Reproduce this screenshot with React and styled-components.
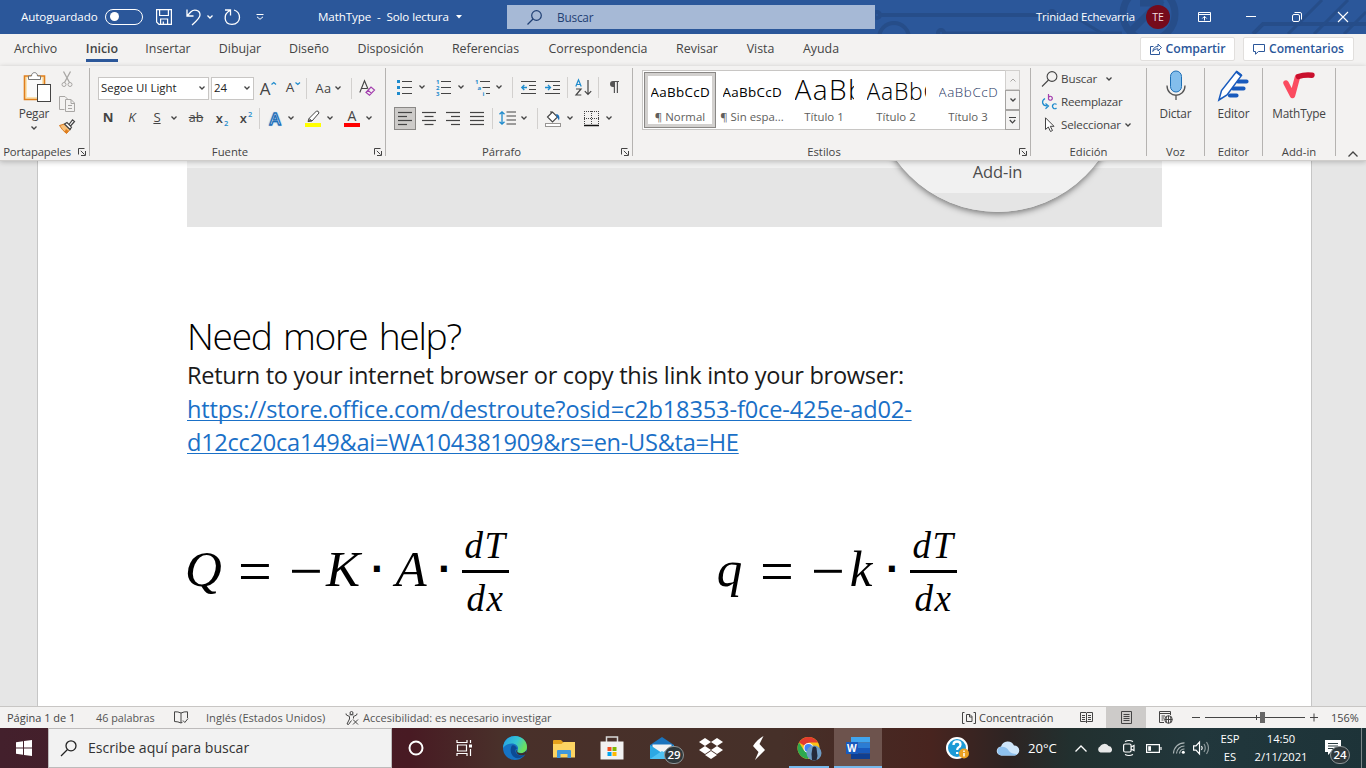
import React from 'react';
import styled, { createGlobalStyle } from 'styled-components';

const UI = '"Open Sans", "Noto Sans", sans-serif';
const INK = '#444444';
const BLUE = '#2b579a';
const ACCENT = '#1e8bcd';

const GlobalStyle = createGlobalStyle`
  * { box-sizing: border-box; }
  body { margin: 0; overflow: hidden; font-family: ${UI}; }
`;

const Screen = styled.div`
  width: 1366px;
  height: 768px;
  display: flex;
  flex-direction: column;
  background: #e6e6e6;
  overflow: hidden;
`;

const Art = styled.svg`
  display: block;
  flex: none;
  fill: none;
  overflow: visible;
`;

function Icon({ w = 16, h = 16, stroke = INK, sw = 1, children }) {
  return (
    <Art width={w} height={h} viewBox={`0 0 ${w} ${h}`} stroke={stroke} strokeWidth={sw}>
      {children}
    </Art>
  );
}

const Text = styled.span`
  display: block;
  flex: none;
  white-space: nowrap;
  width: ${(p) => (p.$w ? `${p.$w}px` : 'auto')};
  margin-left: ${(p) => p.$ml || 0}px;
  font-size: ${(p) => p.$size || 12}px;
  font-weight: ${(p) => p.$weight || 400};
  letter-spacing: ${(p) => p.$ls || 0}px;
  color: ${(p) => p.$color || INK};
  line-height: 16px;
`;

const Slot = styled.div`
  flex: none;
  display: flex;
  align-items: center;
  justify-content: center;
  width: ${(p) => p.$w}px;
  height: ${(p) => p.$h || 24}px;
  margin-left: ${(p) => p.$ml || 0}px;
`;

/* ---------- title bar ---------- */

const TitleBar = styled.header`
  position: relative;
  flex: none;
  height: 34px;
  display: flex;
  align-items: center;
  background: ${BLUE};
`;

const Circuit = styled.svg`
  position: absolute;
  left: 860px;
  top: 0;
  fill: none;
  stroke: #264d89;
`;

const Toggle = styled.div`
  flex: none;
  width: 38px;
  height: 16px;
  margin-left: 8px;
  margin-top: -1px;
  padding: 2px 4px;
  border: 1px solid #fff;
  border-radius: 8px;
`;

const Knob = styled.div`
  width: 9px;
  height: 9px;
  margin-top: 0.5px;
  border-radius: 50%;
  background: #fff;
`;

const SearchField = styled.div`
  position: relative;
  flex: none;
  width: 368px;
  height: 24px;
  margin-top: 0;
  margin-left: 45px;
  padding-left: 20px;
  display: flex;
  align-items: center;
  background: #a6b9d6;
`;

const Account = styled.div`
  position: relative;
  flex: none;
  margin-left: 161px;
  display: flex;
  align-items: center;
`;

const Avatar = styled.div`
  width: 24px;
  height: 24px;
  margin-left: 11px;
  border-radius: 50%;
  background: #750b1c;
  color: #f3dfe1;
  font-size: 10.5px;
  line-height: 24px;
  text-align: center;
`;

const WindowButtons = styled.div`
  position: relative;
  display: flex;
  align-items: center;
  margin-left: 17px;
  margin-top: -1px;
`;

function Chevron({ color = INK, w = 6 }) {
  return (
    <Icon w={w} h={4} stroke={color} sw={1.3}>
      <path d={`M.5 .5 L${w / 2} 3 L${w - 0.5} .5`} />
    </Icon>
  );
}

function Title() {
  return (
    <TitleBar>
      <Circuit width="506" height="34" strokeWidth="4">
        <circle cx="17" cy="15" r="3" />
        <path d="M20 15 H186" />
        <circle cx="192" cy="14" r="3" />
        <path d="M195 15 H212 L243 34" strokeWidth="3" />
        <circle cx="34" cy="38" r="15" />
        <circle cx="81" cy="33" r="3" />
        <path d="M85 33 H262" strokeWidth="3" />
        <circle cx="289" cy="14" r="26" strokeWidth="7" />
        <path d="M272 30 L302 0 M280 3 H300 V22" strokeWidth="7" />
        <path d="M393 34 L403 24 H506" />
        <path d="M428 34 L462 0 M454 34 L488 0 M484 34 L506 12" strokeWidth="3" />
      </Circuit>
      <Text $size={11.6} $color="#fff" $ls={-0.1} $ml={21} $w={76}>Autoguardado</Text>
      <Toggle><Knob /></Toggle>
      <Slot $w={16} $ml={13}>
        <Icon stroke="#fff" sw={1.2}>
          <path d="M.6 .6 H15.4 V15.4 H3 L.6 13 Z M3.6 .6 V6.5 H12.4 V.6 M4.6 15.4 V10 H11.6 V15.4 M7.3 12.5 V15" />
        </Icon>
      </Slot>
      <Slot $w={17} $ml={14}>
        <Icon w={17} stroke="#fff" sw={1.3}>
          <path d="M1 .5 V7 H7.5 M1 7 L5 2.8 C8-.2 14 1 14 6 C14 9 11 11.500 6 16" />
        </Icon>
      </Slot>
      <Slot $w={12} $ml={1}><Chevron color="#fff" /></Slot>
      <Slot $w={17} $ml={8}>
        <Icon w={17} stroke="#fff" sw={1.3}>
          <path d="M1 1 H6.500 V6.500 M6 1.5 C-1 5 -.5 15.400 8 15.400 C13 15.400 15.500 11.500 15.500 8.500 C15.500 5 13 2 10 1" />
        </Icon>
      </Slot>
      <Slot $w={14} $ml={12}>
        <Icon w={8} h={6} stroke="#fff">
          <path d="M.5 .5 H7.5 M1 2.800 L4 5.300 L7 2.800" />
        </Icon>
      </Slot>
      <Text $size={11.6} $color="#fff" $ls={-0.1} $ml={51} $w={131}>MathType&nbsp; -&nbsp; Solo lectura</Text>
      <Slot $w={7} $ml={6}>
        <Icon w={6} h={4} stroke="none"><path d="M0 0 H6 L3 3.500 Z" fill="#fff" /></Icon>
      </Slot>
      <SearchField>
        <Icon w={15} h={15} stroke="#1f3f73" sw={1.2}>
          <circle cx="9.500" cy="5.500" r="4.800" />
          <path d="M6 9 L.5 14.500" />
        </Icon>
        <Text $size={11.8} $ls={-0.2} $color="#1f3f73" $ml={15}>Buscar</Text>
      </SearchField>
      <Account>
        <Text $size={11.4} $color="#fff" $ls={-0.2} $w={99}>Trinidad Echevarria</Text>
        <Avatar>TE</Avatar>
      </Account>
      <WindowButtons>
        <Slot $w={34} $ml={0}>
          <Icon w={13} h={10} stroke="#fff">
            <path d="M.5 .5 H12.500 V9.500 H.5 Z M.5 2.500 H12.500 M6.500 8.500 V4.500 M4.300 6.500 L6.500 4.300 L8.700 6.500" />
          </Icon>
        </Slot>
        <Slot $w={46} $ml={7}><Icon w={10} h={2} stroke="#fff"><path d="M0 .5 H10" /></Icon></Slot>
        <Slot $w={46}>
          <Icon w={10} h={10} stroke="#fff">
            <rect x=".5" y="2.500" width="7" height="7" rx="1.500" />
            <path d="M2.500 .5 H8 Q9.500 .5 9.500 2 V7.500" />
          </Icon>
        </Slot>
        <Slot $w={46}><Icon w={10} h={10} stroke="#fff" sw={1.1}><path d="M0 0 L10 10 M10 0 L0 10" /></Icon></Slot>
      </WindowButtons>
    </TitleBar>
  );
}

/* ---------- tabs ---------- */

const TabBar = styled.nav`
  flex: none;
  height: 32px;
  display: flex;
  background: #f3f2f1;
  padding-left: 14px;
`;

const Tab = styled.div`
  flex: none;
  width: ${(p) => p.$w}px;
  height: 28px;
  margin-right: ${(p) => p.$gap || 28}px;
  display: flex;
  justify-content: center;
  font-size: 12.4px;
  font-weight: ${(p) => (p.$active ? 600 : 400)};
  letter-spacing: ${(p) => p.$ls || 0}px;
  line-height: 30px;
  white-space: nowrap;
  color: ${INK};
  border-bottom: 3px solid ${(p) => (p.$active ? BLUE : 'transparent')};
`;

const TabActions = styled.div`
  flex: 1;
  display: flex;
  justify-content: flex-end;
  gap: 8px;
  padding: 3px 12px 0 0;
`;

const ActionButton = styled.button`
  width: ${(p) => p.$w}px;
  height: 24px;
  padding: 0;
  display: flex;
  align-items: center;
  justify-content: center;
  gap: 4px;
  background: #fff;
  border: 1px solid #e1dfdd;
  border-radius: 2px;
  font-family: ${UI};
`;

const tabs = [
  ['Archivo', 43, 29], ['Inicio', 32, 28], ['Insertar', 44, 29], ['Dibujar', 42, 28],
  ['Diseño', 40, 28], ['Disposición', 67, 28], ['Referencias', 67, 29], ['Correspondencia', 100, 28],
  ['Revisar', 42, 28], ['Vista', 29, 28], ['Ayuda', 36, 28],
];

function Tabs() {
  return (
    <TabBar>
      {tabs.map(([name, w, gap]) => (
        <Tab key={name} $w={w} $gap={gap} $active={name === 'Inicio'}>{name}</Tab>
      ))}
      <TabActions>
        <ActionButton $w={95}>
          <Icon w={12} h={12} stroke={BLUE}>
            <path d="M3.500 3.500 H.5 V11.500 H9.500 V8.500 M2.800 8.500 C3.200 5 5 3.500 8 3.500 V1 L11.500 4.600 L8 8 V5.800 C5.500 5.800 4 6.500 2.800 8.500 Z" />
          </Icon>
          <Text $size={12.3} $ls={-0.1} $weight={600} $color={BLUE}>Compartir</Text>
        </ActionButton>
        <ActionButton $w={111}>
          <Icon w={12} h={12} stroke={BLUE}>
            <path d="M.5 1.500 H11.500 V8.500 H5.500 L2.500 11.200 V8.500 H.5 Z" />
          </Icon>
          <Text $size={12.1} $weight={600} $color={BLUE}>Comentarios</Text>
        </ActionButton>
      </TabActions>
    </TabBar>
  );
}

/* ---------- ribbon ---------- */

const RibbonBar = styled.section`
  position: relative;
  z-index: 2;
  flex: none;
  height: 95px;
  display: flex;
  padding-top: 2px;
  background: #f3f2f1;
  border-bottom: 1px solid #cfcdcb;
  box-shadow: 0 1px 5px rgba(0, 0, 0, 0.22);
`;

const Group = styled.div`
  flex: none;
  width: ${(p) => p.$w}px;
  height: 88px;
  display: flex;
  flex-direction: column;
  border-right: 1px solid #b5b3b1;
`;

const GroupBody = styled.div`
  flex: none;
  height: 76px;
  display: flex;
  flex-direction: ${(p) => (p.$column ? 'column' : 'row')};
`;

const GroupFoot = styled.div`
  flex: none;
  height: 16px;
  display: flex;
  align-items: center;
  justify-content: center;
`;

const FootLabel = styled.div`
  flex: 1;
  text-align: center;
  white-space: nowrap;
  font-size: 11.3px;
  letter-spacing: ${(p) => (p.$tight ? -0.15 : 0)}px;
  line-height: 16px;
  color: ${INK};
`;

const Tools = styled.div`
  flex: none;
  display: flex;
  align-items: center;
  height: 30px;
  margin-top: ${(p) => p.$mt || 0}px;
  padding-left: ${(p) => p.$pl || 0}px;
`;

const Divider = styled.div`
  flex: none;
  width: 1px;
  height: 21px;
  margin-left: ${(p) => p.$ml}px;
  background: #d2d0ce;
`;

const Combo = styled.div`
  flex: none;
  width: ${(p) => p.$w}px;
  height: 23px;
  margin-left: ${(p) => p.$ml || 0}px;
  padding: 0 3px 0 2px;
  display: flex;
  align-items: center;
  justify-content: space-between;
  background: #fff;
  border: 1px solid #c8c6c4;
`;

const Glyph = styled.span`
  display: block;
  font-family: ${UI};
  font-size: ${(p) => p.$size || 13}px;
  font-weight: ${(p) => p.$weight || 400};
  font-style: ${(p) => (p.$italic ? 'italic' : 'normal')};
  text-decoration: ${(p) => p.$deco || 'none'};
  letter-spacing: ${(p) => p.$ls || 0}px;
  color: ${(p) => p.$color || INK};
  line-height: 1;
  sub, sup { font-size: 7.5px; line-height: 0; color: ${ACCENT}; margin-left: 1px; font-weight: 600; }
`;

function Launcher() {
  return (
    <Slot $w={15} $h={12}>
      <Icon w={8} h={8}>
        <path d="M.5 6.500 V.5 H6.500 M2.800 2.800 L6.500 6.500 M7.500 3 V7.500 H3" />
      </Icon>
    </Slot>
  );
}

function Foot({ label, launcher, tight }) {
  return (
    <GroupFoot>
      <FootLabel $tight={tight}>{label}</FootLabel>
      {launcher && <Launcher />}
    </GroupFoot>
  );
}

const PasteColumn = styled.div`
  width: 50px;
  margin-left: 9px;
  padding-top: 4px;
  display: flex;
  flex-direction: column;
  align-items: center;
`;

const SmallColumn = styled.div`
  width: 16px;
  display: flex;
  flex-direction: column;
  align-items: center;
  gap: 7.5px;
  padding-top: 3px;
`;

const PasteBox = styled.div`
  width: 50px;
  display: flex;
  justify-content: center;
  padding: 0 0 3px 5px;
`;

function Clipboard() {
  return (
    <Group $w={90}>
      <GroupBody>
        <PasteColumn>
          <PasteBox>
            <Icon w={28} h={30}>
              <path d="M1.500 4 H21.500 V27.500 H1.500 Z" fill="#fbe3b2" stroke="#e07f1c" strokeWidth="1.6" />
              <path d="M4 6 H19 V25 H4 Z" fill="#fafafa" stroke="none" />
              <path d="M5.500 7.500 V4 H8.500 C8.500 -.5 14.500 -.5 14.500 4 H17.500 V7.500 Z" fill="#fff" stroke="#777" />
              <rect x="14.500" y="12.500" width="13" height="17" fill="#fff" stroke="#444" />
            </Icon>
          </PasteBox>
          <Text $size={11.8} $ls={-0.2}>Pegar</Text>
          <Slot $w={10} $h={13}><Chevron /></Slot>
        </PasteColumn>
        <SmallColumn>
          <Icon w={12} h={17} stroke="#a8a6a4">
            <path d="M2.500 .5 L8.500 11.500 M9.500 .5 L3.500 11.500" strokeWidth="1.3" />
            <circle cx="3" cy="13.500" r="2" /><circle cx="9" cy="13.500" r="2" />
          </Icon>
          <Icon w={16} h={16} stroke="#a8a6a4">
            <path d="M5.500 13.500 H.5 V.5 H6 L8.500 3" />
            <path d="M6.500 3.500 H12 L15.500 7 V15.500 H6.500 Z M12 3.500 V7.500 H15.500 M9 9.500 H13 M9 12.500 H13" />
          </Icon>
          <Icon w={16} h={15}>
            <path d="M.5 6.500 L5.500 5 L11 10.500 L7.500 14.500 Q3 11 .5 6.500 Z" fill="#f8c07a" stroke="#d9781c" />
            <path d="M5.500 13 L7.500 14.500 L9.500 12 L7 10 Z" fill="#e07f1c" stroke="none" />
            <path d="M5.500 5 L8 3.500 L12.500 8 L11 10.500 Z M10 5.500 L13.500 .8 L15.500 2.500 L11.500 7" fill="#fff" stroke="#444" strokeWidth="1.200" />
          </Icon>
        </SmallColumn>
      </GroupBody>
      <Foot label="Portapapeles" launcher tight />
    </Group>
  );
}

const GlowA = styled.span`
  font-size: 17px;
  font-weight: 600;
  line-height: 1;
  color: #fff;
  -webkit-text-stroke: 1.3px #1f6fb8;
  text-shadow: 0 0 2px #6fb6e6, 0 0 2px #6fb6e6;
`;

const Swatched = styled.div`
  display: flex;
  flex-direction: column;
  align-items: center;
`;

const Swatch = styled.div`
  width: 16px;
  height: 4px;
  background: ${(p) => p.$color};
  border: ${(p) => (p.$outline ? '1px solid #979593' : 'none')};
`;

function FontGroup() {
  return (
    <Group $w={296}>
      <GroupBody $column>
        <Tools $pl={8} $mt={5}>
          <Combo $w={111}><Text $size={11.4} $color="#222">Segoe UI Light</Text><Chevron /></Combo>
          <Combo $w={43} $ml={2}><Text $size={11.4} $color="#222">24</Text><Chevron /></Combo>
          <Slot $w={10} $ml={6}><Glyph $size={17}>A</Glyph></Slot>
          <Slot $w={5} $h={12} $ml={0.5}><Icon w={5} h={16} stroke={ACCENT} sw={1.2}><path d="M.5 4.500 L2.800 2.500 L5 4.500" /></Icon></Slot>
          <Slot $w={9} $ml={10}><Glyph $size={13.5}>A</Glyph></Slot>
          <Slot $w={5} $h={12}><Icon w={5} h={16} stroke={ACCENT} sw={1.2}><path d="M.5 2.500 L2.800 4.500 L5 2.500" /></Icon></Slot>
          <Divider $ml={6.5} />
          <Slot $w={17} $ml={8}><Glyph $size={12.8} $ls={0.5}>Aa</Glyph></Slot>
          <Slot $w={8} $ml={2}><Chevron /></Slot>
          <Divider $ml={9} />
          <Slot $w={16} $ml={7}>
            <Icon w={16} h={16}>
              <path d="M.8 12.500 L5.500 .8 L9 9 M2.400 8.500 H8" strokeWidth="1.1" />
              <path d="M7 12.500 L12 7 L15.500 10 L10.500 15.300 Z M9 10.300 L12.500 13.400" fill="#f3f2f1" stroke="#a33fae" strokeWidth="1.200" />
            </Icon>
          </Slot>
        </Tools>
        <Tools $pl={7}>
          <Slot $w={22}><Glyph $size={13.2} $weight={700}>N</Glyph></Slot>
          <Slot $w={22} $ml={2}><Glyph $size={13.2} $italic>K</Glyph></Slot>
          <Slot $w={22} $ml={3}><Glyph $size={13.2} $deco="underline">S</Glyph></Slot>
          <Slot $w={8} $ml={2}><Chevron /></Slot>
          <Slot $w={22} $ml={7}><Glyph $size={12.5} $deco="line-through">ab</Glyph></Slot>
          <Slot $w={22} $ml={4}><Glyph $size={13} $weight={600}>x<sub>2</sub></Glyph></Slot>
          <Slot $w={22} $ml={2}><Glyph $size={13} $weight={600}>x<sup>2</sup></Glyph></Slot>
          <Divider $ml={2} />
          <Slot $w={18} $ml={6}><GlowA>A</GlowA></Slot>
          <Slot $w={8} $ml={3}><Chevron /></Slot>
          <Slot $w={18} $ml={9}>
            <Swatched>
              <Icon w={16} h={13}>
                <path d="M4 8.500 L11.500 1 Q13.500 .5 14 3 L7 11 Z M4 8.500 L3 11.500 L7 11" fill="#fff" />
                <path d="M3 11.500 L5 9.500 L7 11 Z" fill="#555" stroke="none" />
              </Icon>
              <Swatch $color="#ffff00" />
            </Swatched>
          </Slot>
          <Slot $w={8} $ml={4}><Chevron /></Slot>
          <Slot $w={18} $ml={9}>
            <Swatched><Glyph $size={14}>A</Glyph><Swatch $color="#ff0000" /></Swatched>
          </Slot>
          <Slot $w={8} $ml={4}><Chevron /></Slot>
        </Tools>
      </GroupBody>
      <Foot label="Fuente" launcher />
    </Group>
  );
}

const ToggleButton = styled.div`
  flex: none;
  width: 22px;
  height: 23px;
  margin-left: 8px;
  display: flex;
  align-items: center;
  justify-content: center;
  background: #cdcbc9;
  border: 1px solid #8a8886;
`;

const NumberMark = styled.text`
  font: 700 6px ${UI};
  fill: ${ACCENT};
  stroke: none;
`;

function Lines({ rows }) {
  return (
    <Icon w={14} h={13} sw={1.2}>
      {rows.map(([a, b], i) => <path key={i} d={`M${a} ${0.5 + i * 4} H${b}`} />)}
    </Icon>
  );
}

function ParagraphGroup() {
  return (
    <Group $w={247}>
      <GroupBody $column>
        <Tools $pl={11} $mt={4}>
          <Slot $w={15}>
            <Icon w={15} h={15}>
              <path d="M0 0 h3 v3 h-3 z M0 6 h3 v3 h-3 z M0 12 h3 v3 h-3 z" fill={ACCENT} stroke="none" />
              <path d="M5 1.500 H15 M5 7.500 H15 M5 13.500 H15" />
            </Icon>
          </Slot>
          <Slot $w={8} $ml={6}><Chevron /></Slot>
          <Slot $w={15} $ml={10}>
            <Icon w={15} h={15}>
              <NumberMark x="0" y="4">1</NumberMark><NumberMark x="0" y="10">2</NumberMark><NumberMark x="0" y="16">3</NumberMark>
              <path d="M5 1.500 H15 M5 7.500 H15 M5 13.500 H15" />
            </Icon>
          </Slot>
          <Slot $w={8} $ml={6}><Chevron /></Slot>
          <Slot $w={15} $ml={10}>
            <Icon w={15} h={15}>
              <NumberMark x="0" y="4">1</NumberMark><NumberMark x="2.500" y="10">a</NumberMark><NumberMark x="7.500" y="16">i</NumberMark>
              <path d="M5 1.500 H15 M7.500 7.500 H15 M11 13.500 H15" />
            </Icon>
          </Slot>
          <Slot $w={8} $ml={5}><Chevron /></Slot>
          <Divider $ml={9} />
          <Slot $w={15} $ml={8}>
            <Icon w={15} h={13}>
              <path d="M0 .5 H15 M8 4.500 H15 M8 8.500 H15 M0 12.500 H15" />
              <path d="M6 6.500 H.8 M3.300 4 L.8 6.500 L3.300 9" stroke={ACCENT} strokeWidth="1.300" />
            </Icon>
          </Slot>
          <Slot $w={15} $ml={9}>
            <Icon w={15} h={13}>
              <path d="M0 .5 H15 M8 4.500 H15 M8 8.500 H15 M0 12.500 H15" />
              <path d="M0 6.500 H5.500 M3 4 L5.500 6.500 L3 9" stroke={ACCENT} strokeWidth="1.300" />
            </Icon>
          </Slot>
          <Divider $ml={7} />
          <Slot $w={17} $ml={7}>
            <Icon w={17} h={17}>
              <path d="M.8 7.500 L3.500 .8 L6.200 7.500 M1.800 5.500 H5.200" stroke={ACCENT} strokeWidth="1.200" />
              <path d="M1 10 H6 L1 16 H6.300 M13 1 V15.500 M9.800 12.200 L13 15.500 L16.200 12.200" strokeWidth="1.200" />
            </Icon>
          </Slot>
          <Divider $ml={6} />
          <Slot $w={12} $ml={9}>
            <Icon w={10} h={12} stroke="none">
              <path d="M4 6 A3 3 0 0 1 4 0 H10 V1 H9 V12 H7.800 V1 H6 V12 H4.800 V6 Z" fill="#555" />
            </Icon>
          </Slot>
        </Tools>
        <Tools $mt={1}>
          <ToggleButton><Lines rows={[[0, 14], [0, 9], [0, 14], [0, 9]]} /></ToggleButton>
          <Slot $w={14} $ml={6}><Lines rows={[[0, 14], [2.5, 11.5], [0, 14], [2.5, 11.5]]} /></Slot>
          <Slot $w={14} $ml={10}><Lines rows={[[0, 14], [5, 14], [0, 14], [5, 14]]} /></Slot>
          <Slot $w={14} $ml={10}><Lines rows={[[0, 14], [0, 14], [0, 14], [0, 14]]} /></Slot>
          <Divider $ml={8} />
          <Slot $w={17} $ml={6}>
            <Icon w={17} h={14}>
              <path d="M7.500 1 H17 M7.500 5 H17 M7.500 9 H17 M7.500 13 H17" />
              <path d="M3 .8 V13.200 M.5 3.300 L3 .8 L5.500 3.300 M.5 10.700 L3 13.200 L5.500 10.700" stroke={ACCENT} strokeWidth="1.300" />
            </Icon>
          </Slot>
          <Slot $w={8} $ml={4}><Chevron /></Slot>
          <Divider $ml={9} />
          <Slot $w={16} $ml={7}>
            <Swatched>
              <Icon w={16} h={13}>
                <path d="M6 1 V4 M2.500 7 L7.500 2 L12.500 7 L7.500 12 Z" fill="#fff" strokeWidth="1.100" />
                <path d="M11 4 Q15.500 4 14 10.500 L12 7 Z" fill="#1f6fb8" stroke="none" />
              </Icon>
              <Swatch $color="#fff" $outline />
            </Swatched>
          </Slot>
          <Slot $w={8} $ml={5}><Chevron /></Slot>
          <Slot $w={15} $ml={10}>
            <Icon w={15} h={15}>
              <path d="M.5 0 V14 M14.500 0 V14 M0 .5 H15 M7.500 0 V14 M0 7.500 H15" strokeDasharray="1 1" />
              <path d="M0 14.500 H15" stroke="#111" strokeWidth="1.500" />
            </Icon>
          </Slot>
          <Slot $w={8} $ml={6}><Chevron /></Slot>
        </Tools>
      </GroupBody>
      <Foot label="Párrafo" launcher />
    </Group>
  );
}

const Gallery = styled.div`
  width: 378px;
  height: 60px;
  margin: 2px 0 0 9px;
  display: flex;
  background: #fff;
  border: 1px solid #c8c6c4;
`;

const StyleCard = styled.div`
  flex: none;
  width: 72px;
  height: 56px;
  margin: 1px 0 0 ${(p) => (p.$active ? 1 : 0)}px;
  padding: ${(p) => (p.$active ? 0 : 4)}px;
  display: flex;
  flex-direction: column;
  align-items: center;
  border: ${(p) => (p.$active ? '1px solid #8a8886' : 'none')};
  box-shadow: ${(p) => (p.$active ? 'inset 0 0 0 3px #d2d0ce' : 'none')};
  padding-top: ${(p) => (p.$active ? 3 : 4)}px;
`;

const Preview = styled.div`
  flex: none;
  width: 59px;
  height: 33px;
  overflow: hidden;
  white-space: nowrap;
  font-family: ${UI};
  font-size: ${(p) => p.$size}px;
  font-weight: ${(p) => p.$weight || 400};
  letter-spacing: ${(p) => p.$ls || 0}px;
  line-height: ${(p) => p.$lh}px;
  color: ${(p) => p.$color || '#000'};
`;

const CardName = styled.div`
  width: 64px;
  text-align: center;
  font-size: 11.4px;
  line-height: 16px;
  white-space: nowrap;
  color: #605e5c;
`;

const Scroller = styled.div`
  width: 15px;
  margin: -1px -1px -1px auto;
  display: flex;
  flex-direction: column;
`;

const ScrollButton = styled.div`
  height: 20px;
  display: flex;
  align-items: center;
  justify-content: center;
  border: 1px solid ${(p) => (p.$dim ? '#d2d0ce' : '#a5a3a1')};
  background: #f3f2f1;
`;

const cards = [
  { name: '¶ Normal', sample: 'AaBbCcD', size: 13.4, lh: 32, ls: 0.3, active: true },
  { name: '¶ Sin espa...', sample: 'AaBbCcD', size: 13.4, lh: 32, ls: 0.3 },
  { name: 'Título 1', sample: 'AaBb', size: 28, lh: 26, weight: 300, ls: 1.4 },
  { name: 'Título 2', sample: 'AaBbC', size: 23, lh: 30, weight: 300, ls: 0.7 },
  { name: 'Título 3', sample: 'AaBbCcD', size: 13.4, lh: 32, weight: 300, ls: 0.6, color: '#1f3763' },
];

function StylesGroup() {
  return (
    <Group $w={398}>
      <GroupBody>
        <Gallery>
          {cards.map((c) => (
            <StyleCard key={c.name} $active={c.active}>
              <Preview $size={c.size} $lh={c.lh} $weight={c.weight} $ls={c.ls} $color={c.color}>{c.sample}</Preview>
              <CardName>{c.name}</CardName>
            </StyleCard>
          ))}
          <Scroller>
            <ScrollButton $dim><Icon w={6} h={4} stroke="#a8a6a4"><path d="M.5 3.500 L3 1 L5.500 3.500" /></Icon></ScrollButton>
            <ScrollButton><Chevron /></ScrollButton>
            <ScrollButton>
              <Icon w={7} h={7}><path d="M0 .5 H7 M.8 3 L3.500 5.800 L6.200 3" strokeWidth="1.200" /></Icon>
            </ScrollButton>
          </Scroller>
        </Gallery>
      </GroupBody>
      <Foot label="Estilos" launcher />
    </Group>
  );
}

const EditRows = styled.div`
  margin-top: -1px;
`;

const EditRow = styled.div`
  height: 23px;
  padding-left: 11px;
  display: flex;
  align-items: center;
`;

function EditingGroup() {
  return (
    <Group $w={116}>
      <GroupBody $column>
        <EditRows>
          <EditRow>
            <Icon stroke={INK} sw={1.1}>
              <circle cx="10" cy="5.500" r="4.900" /><path d="M6.500 9 L0 15.500" />
            </Icon>
            <Text $size={11.6} $ls={-0.1} $ml={3} $w={36}>Buscar</Text>
            <Slot $w={8} $ml={8}><Chevron /></Slot>
          </EditRow>
          <EditRow>
            <Icon sw={1.2}>
              <path d="M6.500 0 V5.500 M6.500 3.500 a2 2 0 1 1 0 1.500" stroke="#a33fae" />
              <path d="M14.500 10.500 a2.300 2.500 0 1 0 0 3.500 M3 4.500 C-1 7 0 11.500 5 12 M3.500 9.500 L6.500 12 L3.500 14.800" stroke={ACCENT} />
            </Icon>
            <Text $size={11.6} $ls={-0.25} $ml={3} $w={62}>Reemplazar</Text>
          </EditRow>
          <EditRow>
            <Icon><path d="M3.500 .8 V12.500 L6.300 10 L8.500 14.500 L10.500 13.500 L8.300 9.300 H12 Z" fill="#fff" /></Icon>
            <Text $size={11.6} $ls={-0.15} $ml={3} $w={61}>Seleccionar</Text>
            <Slot $w={8} $ml={2}><Chevron /></Slot>
          </EditRow>
        </EditRows>
      </GroupBody>
      <Foot label="Edición" />
    </Group>
  );
}

const BigTool = styled.div`
  flex: 1;
  padding-top: 2px;
  display: flex;
  flex-direction: column;
  align-items: center;
  gap: 4px;
`;

function BigGroup({ w, name, foot, children }) {
  return (
    <Group $w={w}>
      <GroupBody>
        <BigTool>
          {children}
          <Text $size={11.8} $ls={-0.15}>{name}</Text>
        </BigTool>
      </GroupBody>
      <Foot label={foot} />
    </Group>
  );
}

const CollapseButton = styled.div`
  flex: 1;
  display: flex;
  align-items: flex-end;
  justify-content: center;
  padding: 0 0 3px 3px;
`;

function Ribbon() {
  return (
    <RibbonBar>
      <Clipboard />
      <FontGroup />
      <ParagraphGroup />
      <StylesGroup />
      <EditingGroup />
      <BigGroup w={58} name="Dictar" foot="Voz">
        <Icon w={20} h={31}>
          <rect x="4.500" y="1" width="11" height="21" rx="5.500" fill="#83beec" stroke="#1e6fb5" />
          <path d="M1 15.500 C1 28.500 19 28.500 19 15.500 M10 25.500 V30" stroke="#555" strokeWidth="1.300" />
        </Icon>
      </BigGroup>
      <BigGroup w={58} name="Editor" foot="Editor">
        <Icon w={31} h={31}>
          <path d="M20 11.500 H28.500 M15 18.500 H25.500 M12 25.500 H18.500" stroke="#185abd" strokeWidth="4.200" strokeLinecap="round" />
          <path d="M.9 30 L3.500 20.500 L18.500 1.500 L23.500 5.500 L9 25 Z" fill="#fff" stroke="#185abd" strokeWidth="1.500" />
          <path d="M17.500 2.500 L19 .8 L24 4.600 L22.500 6.500 Z" fill="#185abd" stroke="none" />
        </Icon>
      </BigGroup>
      <BigGroup w={73} name="MathType" foot="Add-in">
        <Icon w={32} h={31}>
          <path d="M3 13 L9.500 25.500 L14.500 7" stroke="#fb4b60" strokeWidth="5.400" strokeLinecap="round" strokeLinejoin="round" />
          <path d="M15.500 6.500 Q21 4.500 29 5.200" stroke="#c9102d" strokeWidth="5.400" strokeLinecap="round" />
        </Icon>
      </BigGroup>
      <CollapseButton><Icon w={10} h={6} sw={1.3}><path d="M.5 5.500 L5 1 L9.500 5.500" /></Icon></CollapseButton>
    </RibbonBar>
  );
}

/* ---------- document ---------- */

const Workspace = styled.main`
  flex: none;
  height: 545px;
  padding-left: 37px;
  background: #e6e6e6;
`;

const Page = styled.article`
  width: 1275px;
  height: 545px;
  padding-left: 149px;
  background: #fff;
  border-left: 1px solid #c6c6c6;
  border-right: 1px solid #c6c6c6;
`;

const Banner = styled.div`
  position: relative;
  width: 975px;
  height: 66px;
  overflow: hidden;
  background: linear-gradient(#f0f0f0 7px, #e5e5e5 7px);
`;

const Badge = styled.div`
  position: absolute;
  left: 686px;
  top: -198px;
  width: 249px;
  height: 249px;
  border-radius: 50%;
  background: linear-gradient(#f1f1f1 230px, #e5e5e5 230px);
  box-shadow: 0 2px 6px rgba(0, 0, 0, 0.5);
  padding-top: 197px;
  text-align: center;
  font-size: 16.5px;
  line-height: 24px;
  letter-spacing: -0.15px;
  color: #4c4c4c;
`;

const Heading = styled.h1`
  margin: 85px 0 0;
  height: 47px;
  font-size: 37.2px;
  font-weight: 300;
  letter-spacing: -1.3px;
  word-spacing: 3px;
  line-height: 48px;
  white-space: nowrap;
  color: #000;
`;

const Copy = styled.p`
  margin: 0;
  height: 33.500px;
  font-size: 23.600px;
  line-height: 33.500px;
  letter-spacing: ${(p) => p.$ls || 0}px;
  white-space: nowrap;
  color: #1a1a1a;
`;

const LinkText = styled.a`
  color: #1a70c7;
  text-decoration: underline;
  text-decoration-thickness: 1px;
  text-underline-offset: 2px;
  text-decoration-skip-ink: none;
`;

const MathRow = styled.div`
  height: 100px;
  margin-top: 61px;
  display: flex;
  align-items: center;
  font-family: "Liberation Serif", serif;
  color: #000;
`;

const Equation = styled.div`
  flex: none;
  display: flex;
  align-items: center;
  margin-right: 208px;
`;

const Sym = styled.div`
  flex: none;
  width: ${(p) => p.$w}px;
  margin-bottom: 3px;
  display: flex;
  justify-content: center;
  font-style: italic;
  font-size: 51px;
  line-height: 60px;
`;

const Operator = styled(Sym)`
  font-style: normal;
  font-size: 60px;
  margin-bottom: 0;
`;

const Dot = styled(Sym)`
  font-family: "Liberation Sans", sans-serif;
  font-style: normal;
  font-weight: 700;
  font-size: 42px;
`;

const Fraction = styled.div`
  width: 47px;
  margin: 2px 0 0 2px;
  text-align: center;
  font-style: italic;
  font-size: 37px;
  letter-spacing: 1.5px;
  line-height: 47px;
`;

const Numerator = styled.div`
  height: 51px;
  border-bottom: 3px solid #000;
`;

const Denominator = styled.div`
  height: 49px;
  line-height: 52px;
`;

function Derivative() {
  return (
    <Fraction>
      <Numerator>dT</Numerator>
      <Denominator>dx</Denominator>
    </Fraction>
  );
}

function Document() {
  return (
    <Workspace>
      <Page>
        <Banner><Badge>Add-in</Badge></Banner>
        <Heading>Need more help?</Heading>
        <Copy $ls={-0.31}>Return to your internet browser or copy this link into your browser:</Copy>
        <Copy $ls={-0.15}><LinkText>https://store.office.com/destroute?osid=c2b18353-f0ce-425e-ad02-</LinkText></Copy>
        <Copy $ls={-0.28}><LinkText>d12cc20ca149&amp;ai=WA104381909&amp;rs=en-US&amp;ta=HE</LinkText></Copy>
        <MathRow>
          <Equation>
            <Sym $w={33}>Q</Sym>
            <Operator $w={70}>=</Operator>
            <Operator $w={32}>−</Operator>
            <Sym $w={42}>K</Sym>
            <Dot $w={28}>·</Dot>
            <Sym $w={38}>A</Sym>
            <Dot $w={30}>·</Dot>
            <Derivative />
          </Equation>
          <Equation>
            <Sym $w={25}>q</Sym>
            <Operator $w={70}>=</Operator>
            <Operator $w={32}>−</Operator>
            <Sym $w={34}>k</Sym>
            <Dot $w={30}>·</Dot>
            <Derivative />
          </Equation>
        </MathRow>
      </Page>
    </Workspace>
  );
}

/* ---------- status bar ---------- */

const StatusBar = styled.footer`
  flex: none;
  height: 22px;
  display: flex;
  align-items: center;
  background: #f3f2f1;
  border-top: 1px solid #c8c6c4;
`;

const StatusRight = styled.div`
  flex: none;
  display: flex;
  align-items: center;
  margin-left: 410px;
`;

const ViewButton = styled.div`
  width: 40px;
  height: 21px;
  display: flex;
  align-items: center;
  justify-content: center;
  background: ${(p) => (p.$active ? '#cdcbc9' : 'transparent')};
`;

function Status() {
  return (
    <StatusBar>
      <Text $size={11} $ml={7} $w={68}>Página 1 de 1</Text>
      <Text $size={10.8} $ml={21} $w={59} $color="#555">46 palabras</Text>
      <Slot $w={14} $ml={19} $h={20}>
        <Icon w={14} h={13}>
          <path d="M7 2 V12 M7 2 Q4 .5 .5 .8 V10.500 Q4 10.500 7 12 M7 2 Q10 .5 13.500 .8 V7 M7 12 L8.500 11.200 M9 9.500 L10.800 11.500 L14 7.500" />
        </Icon>
      </Slot>
      <Text $size={11.1} $ml={18} $w={120} $color="#555">Inglés (Estados Unidos)</Text>
      <Slot $w={14} $ml={19} $h={20}>
        <Icon w={14} h={14}>
          <circle cx="6.500" cy="2" r="1.500" />
          <path d="M1 2.500 Q0 4 4.500 5.500 V8 L2 13 L3.500 13.500 L6.500 9.500 M12 2.500 Q13 4 8.500 5.500 V7.500 M4.500 3.800 H8.500 M8 8.500 L13 13.500 M13 8.500 L8 13.500" />
        </Icon>
      </Slot>
      <Text $size={11} $ml={4} $w={189} $color="#555">Accesibilidad: es necesario investigar</Text>
      <StatusRight>
        <Slot $w={14} $h={20}>
          <Icon w={14} h={12}>
            <path d="M2.500 .5 H.5 V11.500 H2.500 M11.500 .5 H13.500 V11.500 H11.500 M4.500 2.500 H8 L10 4.500 V9.500 H4.500 Z M7.500 2.500 V5 H10" />
          </Icon>
        </Slot>
        <Text $size={11} $ml={3} $w={75}>Concentración</Text>
        <Slot $w={12} $h={20} />
        <ViewButton>
          <Icon w={13} h={11}>
            <path d="M6.500 1 V11 M.5 .5 H6 L6.500 1 L7 .5 H12.500 V9.500 H7.500 L6.500 10.500 L5.500 9.500 H.5 Z M2 3.500 H5 M2 5.500 H5 M2 7.500 H5 M8 3.500 H11 M8 5.500 H11 M8 7.500 H11" />
          </Icon>
        </ViewButton>
        <ViewButton $active>
          <Icon w={11} h={13}>
            <path d="M.5 .5 H10.500 V12.500 H.5 Z M2.500 3.500 H8.500 M2.500 5.500 H8.500 M2.500 7.500 H8.500 M2.500 9.500 H8.500" />
          </Icon>
        </ViewButton>
        <ViewButton>
          <Icon w={14} h={13}>
            <path d="M5 11.500 H.5 V.5 H11.500 V4 M.5 2.500 H11.500 M2.500 5 H6 M2.500 7 H5 M2.500 9 H4.500" />
            <circle cx="9.500" cy="8.500" r="3.800" fill="#f3f2f1" />
            <path d="M5.700 8.500 H13.300 M9.500 4.700 V12.300 M7.500 5.500 Q6.500 8.500 7.500 11.500 M11.500 5.500 Q12.500 8.500 11.500 11.500" />
          </Icon>
        </ViewButton>
        <Slot $w={126} $ml={6} $h={20}>
          <Icon w={126} h={12}>
            <path d="M0 5.500 H8 M13 5.500 H113 M118 5.500 H126 M122 1.500 V9.500 M64.500 3 V8" />
            <path d="M68 0 H73 V11 H68 Z" fill="#666" stroke="none" />
          </Icon>
        </Slot>
        <Text $size={10.9} $ml={13}>156%</Text>
      </StatusRight>
    </StatusBar>
  );
}

/* ---------- taskbar ---------- */

const TaskBar = styled.div`
  flex: none;
  height: 40px;
  display: flex;
  align-items: center;
  background: linear-gradient(90deg, #43202c 0, #481a23 410px, #49302a 500px, #463029 780px, #48241f 930px, #2d2423 1010px, #22302f 1070px, #21373c 1200px, #1d3338 1366px);
`;

const StartButton = styled.div`
  flex: none;
  width: 48px;
  display: flex;
  justify-content: center;
`;

const TaskSearch = styled.div`
  flex: none;
  width: 344px;
  height: 40px;
  padding-left: 12px;
  display: flex;
  align-items: center;
  background: #f2f2f2;
  border: 1px solid #bdbbbb;
`;

const AppButton = styled.div`
  position: relative;
  flex: none;
  width: ${(p) => p.$w || 48}px;
  height: 40px;
  margin-left: ${(p) => p.$ml || 0}px;
  display: flex;
  align-items: center;
  justify-content: center;
  background: ${(p) => (p.$active ? '#6d534d' : 'transparent')};
  border-bottom: 2px solid ${(p) => (p.$open ? '#76b9ed' : 'transparent')};
  padding-top: 2px;
`;

const Count = styled.div`
  position: absolute;
  left: ${(p) => p.$left}px;
  top: ${(p) => p.$top}px;
  width: 20px;
  height: 18px;
  border-radius: 9px;
  border: 1px solid #8d9496;
  background: #2f383b;
  color: #fff;
  font-size: 11.5px;
  font-weight: 600;
  line-height: 16px;
  text-align: center;
`;

const Tray = styled.div`
  flex: none;
  display: flex;
  align-items: center;
  margin-left: 62px;
`;

const TrayText = styled.div`
  width: ${(p) => p.$w}px;
  margin-left: ${(p) => p.$ml || 0}px;
  display: flex;
  flex-direction: column;
  align-items: center;
  white-space: nowrap;
  font-size: 11.2px;
  line-height: 18px;
  color: #fff;
`;

const ActionCenter = styled.div`
  position: relative;
  width: 18px;
  height: 40px;
  margin-left: 18px;
  padding-top: 12px;
`;

const DesktopEdge = styled.div`
  width: 1px;
  height: 40px;
  margin-left: 18px;
  background: #7b8789;
`;

const BrandText = styled.text`
  font: 700 10px ${UI};
  fill: #fff;
  stroke: none;
`;

function Taskbar() {
  return (
    <TaskBar>
      <StartButton>
        <Icon stroke="none">
          <path d="M0 2.300 L7 1.200 V7.500 H0 Z M8 1 L16 0 V7.500 H8 Z M0 8.500 H7 V14.800 L0 13.700 Z M8 8.500 H16 V16 L8 15 Z" fill="#fff" />
        </Icon>
      </StartButton>
      <TaskSearch>
        <Icon w={16} h={16} stroke="#222" sw={1.3}>
          <circle cx="10" cy="5.800" r="5" /><path d="M6.500 9.500 L0 16" />
        </Icon>
        <Text $size={14.1} $color="#333" $ml={11}>Escribe aquí para buscar</Text>
      </TaskSearch>
      <AppButton><Icon><circle cx="8" cy="8" r="6.500" stroke="#fff" strokeWidth="2" /></Icon></AppButton>
      <AppButton>
        <Icon stroke="#fff" sw={1.2}>
          <path d="M1 0 V2.500 H11 V0 M1.500 5 H10.500 V11 H1.500 Z M1 16 V13.500 H11 V16 M14.500 0 V3 M14.500 9 V16" />
          <path d="M13 4.500 H16 V7.500 H13 Z" fill="#fff" stroke="none" />
        </Icon>
      </AppButton>
      <AppButton $ml={3}>
        <Icon w={24} h={24} stroke="none">
          <defs>
            <linearGradient id="edgeTop" x1="0" y1="0" x2="1" y2="0.4">
              <stop offset="0.2" stopColor="#2aa9e0" /><stop offset="0.6" stopColor="#35c6d2" /><stop offset="1" stopColor="#6ce05e" />
            </linearGradient>
          </defs>
          <circle cx="12" cy="12" r="12" fill="#1673c4" />
          <path d="M.2 10 C1.500 3 7 0 12 0 C19 0 24 5 24 11 C24 15 21 17 18 17 C15 17 13.500 16 14.500 14 C16.500 11 13 7.500 9 7.500 C5 7.500 1.500 9 .2 12 Z" fill="url(#edgeTop)" />
          <path d="M9 9.500 C7 12 7 18 11 21 C15 24 20 21 22 18.500 C19 20.500 14.500 19.500 13 17 C11.500 14.500 12.500 13 14 12.500 C13 10 11 8.500 9 9.500 Z" fill="#0c4a94" />
          <path d="M14.500 14 C13.200 16.500 15.500 17.200 18 17.200 C20.500 17.200 22.500 16 23.500 14 L23 18 L21 19 C16 20.500 12.500 17 13.500 14.200 Z" fill="#3d2d2a" />
        </Icon>
      </AppButton>
      <AppButton $ml={1}>
        <Icon w={22} h={19} stroke="none">
          <path d="M0 2 Q0 1 1 1 H8 L10 3 V7 H0 Z" fill="#e4a11c" />
          <path d="M0 5 H8.500 L10.500 3 H22 V18.500 H0 Z" fill="#fcd462" />
          <path d="M4 19 V12 Q4 11 5 11 H17 Q18 11 18 12 V19 H14.500 V15 H7.500 V19 Z" fill="#3f98dc" />
        </Icon>
      </AppButton>
      <AppButton>
        <Icon w={24} h={24} stroke="none">
          <path d="M6.500 6 V1 H17.500 V6" stroke="#d8d8d8" strokeWidth="1.500" />
          <path d="M.5 5.500 H23.500 V23.500 H.5 Z" fill="#f2f2f2" />
          <path d="M7.500 11 H11.500 V15 H7.500 Z" fill="#f25022" /><path d="M12.500 11 H16.500 V15 H12.500 Z" fill="#7fba00" />
          <path d="M7.500 16 H11.500 V20 H7.500 Z" fill="#00a4ef" /><path d="M12.500 16 H16.500 V20 H12.500 Z" fill="#ffb900" />
        </Icon>
      </AppButton>
      <AppButton $ml={2}>
        <Icon w={24} h={24} stroke="none">
          <path d="M0 9 L12 1 L24 9 V23 H0 Z" fill="#1b74bd" />
          <path d="M2.500 8.500 H21.500 V12 L12 18 L2.500 12 Z" fill="#f3f3f3" />
          <path d="M0 9 L12 17 L24 9 V23 H0 Z" fill="#2ca8e3" />
          <path d="M0 23 L12 15 L24 23 Z" fill="#4fc2f2" />
        </Icon>
        <Count $left={26} $top={18}>29</Count>
      </AppButton>
      <AppButton $ml={1}>
        <Icon w={24} h={21} stroke="none">
          <path d="M6 0 L12 4 L6 8 L0 4 Z M18 0 L24 4 L18 8 L12 4 Z M6 8 L12 12 L6 16 L0 12 Z M18 8 L24 12 L18 16 L12 12 Z M12 13 L18 17 L12 21 L6 17 Z" fill="#fff" />
        </Icon>
      </AppButton>
      <AppButton>
        <Icon w={12} h={24} stroke="none">
          <path d="M10.500 0 L6.500 8 L12 14 L2 24 L5.500 16 L0 10 Q4 3.500 10.500 0 Z" fill="#fff" />
        </Icon>
      </AppButton>
      <AppButton $w={40} $ml={6} $open>
        <Icon w={24} h={24} stroke="none">
          <circle cx="11.500" cy="12" r="11" fill="#fbc116" />
          <path d="M11.500 12 L2 6.500 A11 11 0 0 1 21 6.500 H11.500 Z" fill="#e33b2e" />
          <path d="M2 6.500 A11 11 0 0 0 11 23 L16 15 L7 14.500 Z" fill="#2da94f" />
          <circle cx="11.500" cy="12" r="5" fill="#fff" /><circle cx="11.500" cy="12" r="4" fill="#4285f4" />
          <circle cx="17" cy="17" r="7.500" fill="#6e9cc4" />
          <path d="M15.500 11.500 Q18 9.500 19.500 12 L20.500 20 L19.500 24.300 H15 L14.500 18 Z" fill="#252a3a" />
        </Icon>
      </AppButton>
      <AppButton $ml={5} $open $active>
        <Icon w={24} h={22} stroke="none">
          <path d="M5 0 H24 V5.500 H5 Z" fill="#41a5ee" /><path d="M5 5.500 H24 V11 H5 Z" fill="#2b7cd3" />
          <path d="M5 11 H24 V16.500 H5 Z" fill="#185abd" /><path d="M5 16.500 H24 V22 H5 Z" fill="#103f91" />
          <path d="M0 5 H12 V17 H0 Z" fill="#185abd" />
          <BrandText x="1" y="14.600">W</BrandText>
        </Icon>
      </AppButton>
      <Tray>
        <Slot $w={26} $ml={1}>
          <Icon w={24} h={22} stroke="none">
            <circle cx="11" cy="11" r="10" fill="#1c9ad6" stroke="#fff" strokeWidth="2" />
            <path d="M7.500 8 Q7.500 4.500 11 4.500 Q14.500 4.500 14.500 7.500 Q14.500 9.500 12.500 10.500 Q11.200 11.300 11.200 13 M11.200 15 V17" stroke="#fff" strokeWidth="2.300" />
            <circle cx="18" cy="16.500" r="5" fill="#eba021" />
            <path d="M18 13.500 V15 M18 16 V19.500" stroke="#fff" strokeWidth="1.500" />
          </Icon>
        </Slot>
        <Slot $w={24} $ml={25}>
          <Icon w={22} h={16} stroke="none">
            <path d="M4.500 15.500 A4.500 4.500 0 0 1 4 6.500 A7 7 0 0 1 17 5.500 A5 5 0 0 1 17.500 15.500 Z" fill="#cfe6fa" />
            <path d="M4.500 15.500 A4.500 4.500 0 0 1 3 7 Q9 6 12 11 Q14 14 20 14 Q19 15.500 17.500 15.500 Z" fill="#8fc1ee" />
          </Icon>
        </Slot>
        <Text $size={13.1} $color="#fff" $ml={8} $w={30}>20°C</Text>
        <Slot $w={12} $ml={17}><Icon w={12} h={7} stroke="#fff" sw={1.300}><path d="M.5 6.500 L6 1 L11.500 6.500" /></Icon></Slot>
        <Slot $w={16} $ml={10}>
          <Icon w={16} h={10} stroke="none"><path d="M3.500 9.500 A3.200 3.200 0 0 1 3 3.500 A5 5 0 0 1 11.500 3 A3.400 3.400 0 0 1 13 9.500 Z" fill="#e8e8e8" /></Icon>
        </Slot>
        <Slot $w={12} $ml={10}>
          <Icon w={12} h={16} stroke="#fff" sw={1.200}>
            <rect x=".6" y="4" width="7.500" height="8" rx="1.500" /><path d="M8 7 L11 5.500 V10.500 L8 9 M2 1.500 Q6 -.5 10 1.500 M2 14.500 Q6 16.500 10 14.500" />
          </Icon>
        </Slot>
        <Slot $w={16} $ml={11}>
          <Icon w={16} h={9} stroke="#fff" sw={1.200}><path d="M.6 .6 H13.400 V8.400 H.6 Z M15 3 V6" /><path d="M2.200 2.200 H5 V6.800 H2.200 Z" fill="#fff" stroke="none" /></Icon>
        </Slot>
        <Slot $w={13} $ml={10}>
          <Icon w={12} h={12} stroke="#aab4b5" sw={1.200}>
            <path d="M.5 11.500 A11 11 0 0 1 11.500 .8 M3.500 11.500 A8 8 0 0 1 11.500 4 M6.500 11.500 A5 5 0 0 1 11.500 7" />
            <circle cx="10.300" cy="10.300" r="1.500" fill="#fff" stroke="none" />
          </Icon>
        </Slot>
        <Slot $w={18} $ml={7}>
          <Icon w={17} h={14} stroke="#fff" sw={1.200}>
            <path d="M.6 4.800 H3 L6.500 1 V13 L3 9.200 H.6 Z M8.500 5 Q10 7 8.500 9" />
            <path d="M11 3 Q13.500 7 11 11 M13.500 1 Q17.500 7 13.500 13" stroke="#8d999b" />
          </Icon>
        </Slot>
        <TrayText $w={30} $ml={5}><span>ESP</span><span>ES</span></TrayText>
        <TrayText $w={52} $ml={10}><span>14:50</span><span>2/11/2021</span></TrayText>
        <ActionCenter>
          <Icon w={16} h={16} stroke="none">
            <path d="M0 0 H16 V12 H6 L3 15 V12 H0 Z" fill="#fff" />
            <path d="M3 3.500 H13 M3 6 H13 M3 8.500 H9" stroke="#2a3c40" />
          </Icon>
          <Count $left={5} $top={18}>24</Count>
        </ActionCenter>
        <DesktopEdge />
      </Tray>
    </TaskBar>
  );
}

export default function App() {
  return (
    <>
      <GlobalStyle />
      <Screen>
        <Title />
        <Tabs />
        <Ribbon />
        <Document />
        <Status />
        <Taskbar />
      </Screen>
    </>
  );
}
